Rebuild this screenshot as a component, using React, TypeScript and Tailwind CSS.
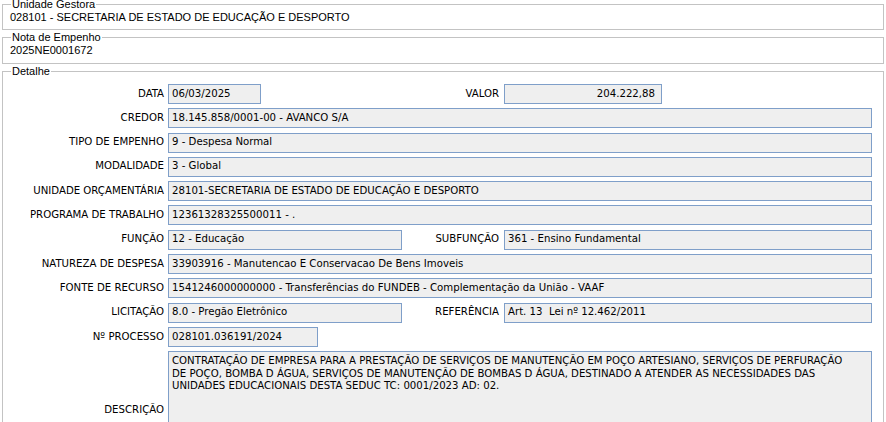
import React from 'react';

type Row =
  | { kind: 'full'; label: string; value: string }
  | { kind: 'pair'; label: string; value: string; w1: string; label2: string; value2: string; w2: string; right?: boolean };

const rows: Row[] = [
  { kind: 'pair', label: 'DATA', value: '06/03/2025', w1: 'w-[93px]', label2: 'VALOR', value2: '204.222,88', w2: 'w-[158px]', right: true },
  { kind: 'full', label: 'CREDOR', value: '18.145.858/0001-00 - AVANCO S/A' },
  { kind: 'full', label: 'TIPO DE EMPENHO', value: '9 - Despesa Normal' },
  { kind: 'full', label: 'MODALIDADE', value: '3 - Global' },
  { kind: 'full', label: 'UNIDADE ORÇAMENTÁRIA', value: '28101-SECRETARIA DE ESTADO DE EDUCAÇÃO E DESPORTO' },
  { kind: 'full', label: 'PROGRAMA DE TRABALHO', value: '12361328325500011 - .' },
  { kind: 'pair', label: 'FUNÇÃO', value: '12 - Educação', w1: 'w-[234px]', label2: 'SUBFUNÇÃO', value2: '361 - Ensino Fundamental', w2: 'w-[368px]' },
  { kind: 'full', label: 'NATUREZA DE DESPESA', value: '33903916 - Manutencao E Conservacao De Bens Imoveis' },
  { kind: 'full', label: 'FONTE DE RECURSO', value: '1541246000000000 - Transferências do FUNDEB - Complementação da União - VAAF' },
  { kind: 'pair', label: 'LICITAÇÃO', value: '8.0 - Pregão Eletrônico', w1: 'w-[234px]', label2: 'REFERÊNCIA', value2: 'Art. 13  Lei nº 12.462/2011', w2: 'w-[368px]' },
];

const fieldCls = 'h-[20px] border border-[#7f9fc9] bg-[#efefef] pl-[3px] flex items-center whitespace-pre overflow-hidden text-black';

const Label = ({ text }: { text: string }) => (
  <div className="flex items-center justify-end pr-[4px] text-black whitespace-nowrap">{text}</div>
);

const GroupBox = ({ title, children, className }: { title: string; children: React.ReactNode; className?: string }) => (
  <fieldset className={`ml-[2px] w-[882px] border border-[#c3c3c3] pl-[7px] ${className ?? ''}`}>
    <legend className="ml-[1px] px-[1px] leading-[13px] text-black">{title}</legend>
    {children}
  </fieldset>
);

export default function App() {
  return (
    <div className="w-[886px] h-[422px] overflow-hidden bg-white text-[11px] font-['Liberation_Sans',Arial,sans-serif]">
      <GroupBox title="Unidade Gestora" className="-mt-[2px] pb-[5px]">
        <div className="leading-[13px]">028101 - SECRETARIA DE ESTADO DE EDUCAÇÃO E DESPORTO</div>
      </GroupBox>
      <GroupBox title="Nota de Empenho" className="mt-[1px] pb-[6px]">
        <div className="leading-[13px]">2025NE0001672</div>
      </GroupBox>
      <GroupBox title="Detalhe" className="mt-[1px] pr-[11px] pb-[10px]">
        <div className="pt-[6px] grid grid-cols-[158px_234px_102px_368px] gap-y-[4.3px] font-['DejaVu_Sans_Condensed','DejaVu_Sans',sans-serif] text-[11.3px]">
          {rows.map((r) =>
            r.kind === 'full' ? (
              <React.Fragment key={r.label}>
                <Label text={r.label} />
                <div className={`${fieldCls} col-span-3`}>{r.value}</div>
              </React.Fragment>
            ) : (
              <React.Fragment key={r.label}>
                <Label text={r.label} />
                <div className={`${fieldCls} ${r.w1}`}>{r.value}</div>
                <div className="flex items-center justify-end pr-[5px] text-black whitespace-nowrap">{r.label2}</div>
                <div className={`${fieldCls} ${r.w2} ${r.right ? 'justify-end pr-[6px]' : ''}`}>{r.value2}</div>
              </React.Fragment>
            )
          )}
          <Label text="Nº PROCESSO" />
          <div className={`${fieldCls} w-[150px]`}>028101.036191/2024</div>
          <div className="col-span-2" />
          <Label text="DESCRIÇÃO" />
          <div className="col-span-3 h-[118px] border border-[#7f9fc9] bg-[#efefef] pl-[3px] pt-[3px] leading-[12.3px] text-black whitespace-nowrap overflow-hidden">
            CONTRATAÇÃO DE EMPRESA PARA A PRESTAÇÃO DE SERVIÇOS DE MANUTENÇÃO EM POÇO ARTESIANO, SERVIÇOS DE PERFURAÇÃO
            <br />
            DE POÇO, BOMBA D ÁGUA, SERVIÇOS DE MANUTENÇÃO DE BOMBAS D ÁGUA, DESTINADO A ATENDER AS NECESSIDADES DAS
            <br />
            UNIDADES EDUCACIONAIS DESTA SEDUC TC: 0001/2023 AD: 02.
          </div>
        </div>
      </GroupBox>
    </div>
  );
}
